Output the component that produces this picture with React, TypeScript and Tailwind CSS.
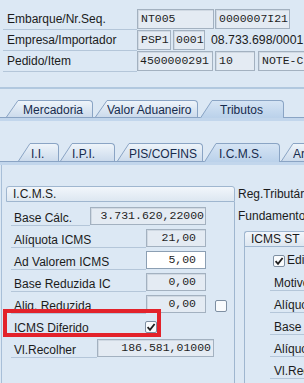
import React from "react";

type TabDef = {
  label: string;
  ml: string;
  bodyW: string;
  pl: string;
  h: number;
  hClass: string;
  active?: boolean;
};

const RO = "bg-[#e4ebf3] border-[#a3b1c0] shadow-[inset_1px_1px_0_#d0d9e3]";
const WH = "bg-white border-[#8c9fb3]";

const Field = ({ text, className }: { text: string; className: string }) => (
  <div
    className={`flex items-center shrink-0 border font-['Liberation_Mono',monospace] text-[11.5px] text-[#1e1e1e] whitespace-nowrap overflow-hidden ${className}`}
  >
    {text}
  </div>
);

const Check = ({ checked, className }: { checked?: boolean; className: string }) => (
  <div
    className={`w-[12px] h-[12px] shrink-0 border border-[#7e8fa2] rounded-[2px] bg-[#f9fbfd] flex items-center justify-center ${className}`}
  >
    {checked && (
      <svg width="10" height="10" viewBox="0 0 10 10">
        <path d="M1.6 5.2 L4 7.8 L8.6 2" fill="none" stroke="#1f1f1f" strokeWidth="1.8" />
      </svg>
    )}
  </div>
);

const TabItem = ({ tab, id }: { tab: TabDef; id: string }) => {
  const hh = tab.active ? tab.h + 1 : tab.h;
  const top = tab.active ? "#d5e4f4" : "#eef4fa";
  const bot = tab.active ? "#bad1ea" : "#ccdbec";
  return (
    <div className={`flex shrink-0 ${tab.ml} ${tab.active ? "relative z-10 -mb-px" : ""}`}>
      <svg width={12} height={hh} className="block shrink-0">
        <defs>
          <linearGradient id={id} x1="0" y1="0" x2="0" y2="1">
            <stop offset="0" stopColor={top} />
            <stop offset="1" stopColor={bot} />
          </linearGradient>
        </defs>
        <polygon points={`0,${hh} 12,0 12,${hh}`} fill={`url(#${id})`} />
        <line x1="0.5" y1={hh} x2="12" y2="0.5" stroke="#8aa4c4" />
      </svg>
      <div
        className={`flex items-end shrink-0 border-t border-r border-[#8aa4c4] rounded-tr-[4px] leading-[14px] text-[#172b4d] whitespace-nowrap overflow-hidden bg-linear-to-b ${
          tab.active ? "from-[#d5e4f4] to-[#bad1ea] pb-[1px]" : "from-[#eef4fa] to-[#ccdbec]"
        } ${tab.bodyW} ${tab.hClass} ${tab.pl}`}
      >
        {tab.label}
      </div>
    </div>
  );
};

const TabStrip = ({ tabs, name, className }: { tabs: TabDef[]; name: string; className: string }) => (
  <div className={className}>
    <div className="flex items-end border-b border-[#8aa4c4]">
      {tabs.map((t, i) => (
        <TabItem key={i} tab={t} id={`${name}-${i}`} />
      ))}
    </div>
    <div className="h-[3px] bg-[#c2d6ec]" />
  </div>
);

const GRow = ({
  label,
  labelW,
  children,
}: {
  label: string;
  labelW: string;
  children?: React.ReactNode;
}) => (
  <div className="relative flex h-[22px] pl-[5px]">
    <div
      className={`h-[22px] shrink-0 border-b border-[#b4c6d9] flex items-end pl-[3px] leading-[14px] whitespace-nowrap ${labelW}`}
    >
      {label}
    </div>
    {children}
  </div>
);

const SRow = ({ label }: { label: string }) => (
  <div className="ml-[25px] h-[22px] border-b border-[#b4c6d9] flex items-end pl-[4px] leading-[14px] whitespace-nowrap">
    {label}
  </div>
);

const tabs1: TabDef[] = [
  { label: "Mercadoria", ml: "ml-[6px]", bodyW: "w-[75px]", pl: "pl-[5px]", h: 17, hClass: "h-[17px]" },
  { label: "Valor Aduaneiro", ml: "ml-[2px]", bodyW: "w-[91px]", pl: "pl-0", h: 17, hClass: "h-[17px]" },
  { label: "Tributos", ml: "ml-[2px]", bodyW: "w-[72px]", pl: "pl-[8px]", h: 17, hClass: "h-[18px]", active: true },
];

const tabs2: TabDef[] = [
  { label: "I.I.", ml: "ml-[18px]", bodyW: "w-[29px]", pl: "pl-[1px]", h: 18, hClass: "h-[18px]" },
  { label: "I.P.I.", ml: "ml-[1px]", bodyW: "w-[43px]", pl: "pl-0", h: 18, hClass: "h-[18px]" },
  { label: "PIS/COFINS", ml: "ml-[2px]", bodyW: "w-[74px]", pl: "pl-0", h: 18, hClass: "h-[18px]" },
  { label: "I.C.M.S.", ml: "ml-[1px]", bodyW: "w-[64px]", pl: "pl-[3px]", h: 18, hClass: "h-[19px]", active: true },
  { label: "Ar", ml: "ml-[1px]", bodyW: "w-[40px]", pl: "pl-0", h: 18, hClass: "h-[18px]" },
];

export default function App() {
  return (
    <div className="w-[304px] h-[383px] overflow-hidden bg-[#dce8f4] font-['Liberation_Sans',Arial,sans-serif] text-[12px] text-[#1b1b1b]">
      {/* header fields */}
      <div className="pt-[9px] pl-[3px]">
        <div className="flex h-[21px]">
          <div className="w-[134px] h-[21px] shrink-0 border-b border-[#b4c6d9] flex items-center pl-[4px]">
            Embarque/Nr.Seq.
          </div>
          <Field text="NT005" className={`${RO} w-[77px] h-[20px] pl-[3px]`} />
          <Field text="0000007I21" className={`${RO} ml-[1px] w-[75px] h-[20px] pl-[3px]`} />
        </div>
        <div className="flex h-[21px]">
          <div className="w-[134px] h-[21px] shrink-0 border-b border-[#b4c6d9] flex items-center pl-[4px]">
            Empresa/Importador
          </div>
          <Field text="PSP1" className={`${RO} w-[34px] h-[20px] pl-[3px]`} />
          <Field text="0001" className={`${RO} ml-[2px] w-[32px] h-[20px] pl-[2px]`} />
          <div className="ml-[6px] h-[20px] flex items-center whitespace-nowrap text-[12.3px]">08.733.698/0001</div>
        </div>
        <div className="flex h-[21px]">
          <div className="w-[134px] h-[21px] shrink-0 border-b border-[#b4c6d9] flex items-center pl-[4px]">
            Pedido/Item
          </div>
          <Field text="4500000291" className={`${RO} w-[76px] h-[20px] pl-[2px]`} />
          <Field text="10" className={`${RO} ml-[2px] w-[40px] h-[20px] pl-[3px]`} />
          <Field text="NOTE-C" className={`${RO} ml-[3px] w-[60px] h-[20px] pl-[3px]`} />
        </div>
      </div>

      <div className="mt-[15px] h-[2px] bg-[#b1c8df]" />

      <TabStrip tabs={tabs1} name="t1" className="mt-[11px]" />
      <TabStrip tabs={tabs2} name="t2" className="mt-[22px]" />

      {/* tab page */}
      <div className="ml-[1px] border-l border-[#a8bfd8] pt-[21px] h-[230px] flex">
        {/* I.C.M.S. group */}
        <div className="ml-[4px] w-[229px] shrink-0">
          <div className="h-[16px] border border-[#9fb6cf] rounded-t-[3px] bg-linear-to-b from-[#f2f6fb] to-[#dde7f1] flex items-center pl-[6px]">
            I.C.M.S.
          </div>
          <div className="border-r border-[#9fb6cf] pt-[2px] h-[200px]">
            <GRow label="Base Cálc." labelW="w-[79px]">
              <Field text="3.731.620,22000" className={`${RO} mt-[3px] w-[116px] h-[18px] justify-end pr-[1px]`} />
            </GRow>
            <GRow label="Alíquota ICMS" labelW="w-[135px]">
              <Field text="21,00" className={`${RO} mt-[3px] w-[60px] h-[18px] justify-end pr-[9px]`} />
            </GRow>
            <GRow label="Ad Valorem ICMS" labelW="w-[135px]">
              <Field text="5,00" className={`${WH} mt-[3px] w-[60px] h-[18px] justify-end pr-[9px]`} />
            </GRow>
            <GRow label="Base Reduzida IC" labelW="w-[135px]">
              <Field text="0,00" className={`${RO} mt-[3px] w-[60px] h-[18px] justify-end pr-[9px]`} />
            </GRow>
            <GRow label="Aliq. Reduzida" labelW="w-[135px]">
              <Field text="0,00" className={`${RO} mt-[3px] w-[60px] h-[18px] justify-end pr-[9px]`} />
              <Check className="ml-[9px] mt-[8px]" />
            </GRow>
            <GRow label="ICMS Diferido" labelW="w-[134px]">
              <Check checked className="mt-[7px]" />
              <div className="absolute -left-[3px] -top-[5px] w-[158px] h-[28px] border-4 border-[#e3222a] z-10" />
            </GRow>
            <GRow label="Vl.Recolher" labelW="w-[86px]">
              <Field text="186.581,01000" className={`${RO} mt-[3px] w-[117px] h-[18px] justify-end pr-[2px]`} />
            </GRow>
          </div>
        </div>

        {/* right column */}
        <div className="ml-[3px] w-[66px] shrink-0">
          <div className="h-[16px] leading-[16px] whitespace-nowrap">Reg.Tributár</div>
          <div className="mt-[6px] h-[16px] leading-[16px] whitespace-nowrap">Fundamento</div>
          <div className="mt-[7px] ml-[6px]">
            <div className="h-[16px] border-t border-l border-b border-[#9fb6cf] rounded-tl-[3px] bg-linear-to-b from-[#f2f6fb] to-[#dde7f1] flex items-center pl-[6px] whitespace-nowrap">
              ICMS ST
            </div>
            <div className="border-l border-[#9fb6cf] h-[150px]">
              <div className="flex h-[22px] pl-[28px]">
                <Check checked className="mt-[8px]" />
                <div className="ml-[2px] mt-[6px] leading-[14px] whitespace-nowrap">Edi</div>
              </div>
              <SRow label="Motivo" />
              <SRow label="Alíquo" />
              <SRow label="Base I" />
              <SRow label="Alíquo" />
              <SRow label="Vl.Rec" />
            </div>
          </div>
        </div>
      </div>
    </div>
  );
}
